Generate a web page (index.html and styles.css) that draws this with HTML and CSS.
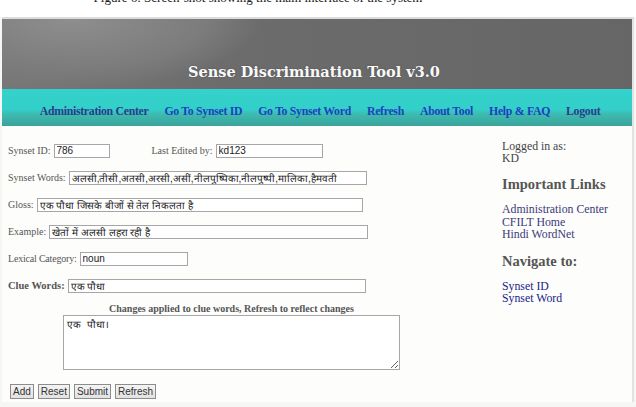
FILE: index.html
```html
<!DOCTYPE html>
<html lang="en">
<head>
    <meta charset="UTF-8">
    <meta name="viewport" content="width=device-width, initial-scale=1.0">
    <title>Sense Discrimination Tool v3.0</title>
    <link rel="stylesheet" href="styles.css">
</head>
<body>
    <p class="caption">Figure 6: Screen-shot showing the main interface of the system</p>

    <div class="frame">
        <div class="header">
            <h1>Sense Discrimination Tool v3.0</h1>
        </div>
        <div class="nav">
            <a href="#">Administration Center</a>
            <a href="#" class="blue">Go To Synset ID</a>
            <a href="#" class="blue">Go To Synset Word</a>
            <a href="#" class="blue">Refresh</a>
            <a href="#" class="blue">About Tool</a>
            <a href="#" class="blue">Help &amp; FAQ</a>
            <a href="#">Logout</a>
        </div>

        <div class="content">
            <form class="main">
                <div class="row">
                    <label for="synsetId">Synset ID:</label>
                    <input type="text" id="synsetId" class="w-id" value="786">
                    <label for="editedBy" class="edited">Last Edited by:</label>
                    <input type="text" id="editedBy" class="w-user" value="kd123">
                </div>
                <div class="row">
                    <label for="words">Synset Words:</label>
                    <input type="text" id="words" class="w-words" value="अलसी,तीसी,अतसी,अरसी,असीं,नीलपुष्पिका,नीलपुष्पी,मालिका,हैमवती">
                </div>
                <div class="row">
                    <label for="gloss">Gloss:</label>
                    <input type="text" id="gloss" class="w-gloss" value="एक पौधा जिसके बीजों से तेल निकलता है">
                </div>
                <div class="row">
                    <label for="example">Example:</label>
                    <input type="text" id="example" class="w-example" value="खेतों में अलसी लहरा रही है">
                </div>
                <div class="row">
                    <label for="category" class="tight">Lexical Category:</label>
                    <input type="text" id="category" class="w-cat" value="noun">
                </div>
                <div class="row">
                    <label for="clue" class="strong">Clue Words:</label>
                    <input type="text" id="clue" class="w-words" value="एक पौधा">
                </div>

                <div class="changes">
                    <p>Changes applied to clue words, Refresh to reflect changes</p>
                    <textarea>एक  पौधा।</textarea>
                </div>

                <div class="buttons">
                    <button type="button">Add</button>
                    <button type="reset">Reset</button>
                    <button type="submit">Submit</button>
                    <button type="button">Refresh</button>
                </div>
            </form>

            <div class="side">
                <p class="user">Logged in as:<br>KD</p>

                <h3>Important Links</h3>
                <ul>
                    <li><a href="#">Administration Center</a></li>
                    <li><a href="#">CFILT Home</a></li>
                    <li><a href="#">Hindi WordNet</a></li>
                </ul>

                <h3>Navigate to:</h3>
                <ul>
                    <li><a href="#" class="dark">Synset ID</a></li>
                    <li><a href="#" class="dark">Synset Word</a></li>
                </ul>
            </div>
        </div>
    </div>
</body>
</html>
```

FILE: styles.css
```css
body {
    margin: 0;
    background-color: #f6f6f4;
    font-family: "Liberation Serif", "Times New Roman", serif;
    color: #555;
}

/* figure caption above the screenshot, only its lower half shows */
.caption {
    margin: -10px 0 0;
    padding-right: 120px;
    height: 27px;
    text-align: center;
    font-size: 13px;
    line-height: 15px;
    color: #222;
    background: #fff;
}

.frame {
    margin: 0 2px;
    border-top: 2px solid #dcdcdc;
    border-right: 2px solid #e2e2e2;
    background: #fdfdfb;
}

.header {
    height: 70px;
    display: flex;
    align-items: flex-end;
    justify-content: center;
    background:
        radial-gradient(ellipse 190px 70px at 70px 0, #8e8e8e 0%, #7c7c7c 70%, rgba(124,124,124,0) 100%),
        linear-gradient(90deg, #777 0%, #6c6c6c 35%, #666 100%);
}

.header h1 {
    margin: 0 6px 9px 0;
    font-family: "DejaVu Serif", Georgia, serif;
    font-size: 14.5px;
    font-weight: bold;
    color: #fafafa;
    text-shadow: 0 0 2px rgba(0, 0, 0, 0.25);
}

.nav {
    height: 37px;
    display: flex;
    justify-content: center;
    align-items: center;
    gap: 16px;
    padding: 7px 0 0 6px;
    box-sizing: border-box;
    background: linear-gradient(180deg, #34d2cc 0%, #33cfc9 55%, #3dbbb0 68%, #3aa39b 100%);
}

.nav a {
    font-size: 11.8px;
    font-weight: bold;
    letter-spacing: -0.3px;
    color: #2b3b8c;
    text-decoration: none;
}

.nav a.blue {
    color: #1f3fc0;
}

.content {
    display: grid;
    grid-template-columns: 494px 1fr;
    padding: 1px 0 3px 6px;
    margin-top: 1px;
    background: #fdfdfb;
}

.main {
    padding-top: 9px;
}

.row {
    display: flex;
    align-items: center;
    height: 27px;
}

.row label {
    font-size: 10px;
    color: #555;
    margin-right: 3px;
}

.row label.edited {
    margin-left: 42px;
}

.row label.tight {
    letter-spacing: -0.2px;
}

.row label.strong {
    font-weight: bold;
    font-size: 10.5px;
}

input[type="text"] {
    height: 14px;
    box-sizing: border-box;
    padding: 0 2px;
    border: 1px solid #a6a6a6;
    background: #fff;
    font-family: "Liberation Sans", Arial, sans-serif;
    font-size: 10px;
    color: #222;
}

.w-id { width: 56px; }
.w-user { width: 107px; }
.w-words { width: 298px; }
.w-gloss { width: 326px; }
.w-example { width: 319px; }
.w-cat { width: 108px; }

.changes {
    margin-left: 55px;
    width: 337px;
}

.changes p {
    margin: 4px 0 0;
    line-height: 12px;
    text-align: center;
    font-size: 10px;
    font-weight: bold;
    color: #555;
}

.changes textarea {
    display: block;
    width: 337px;
    height: 55px;
    box-sizing: border-box;
    padding: 1px 3px;
    border: 1px solid #a6a6a6;
    background: #fff;
    font-family: "Liberation Sans", Arial, sans-serif;
    font-size: 10px;
    color: #222;
    resize: vertical;
}

.buttons {
    display: flex;
    gap: 4px;
    margin: 14px 0 0 2px;
}

button {
    height: 15px;
    padding: 0 2px;
    border: 1px solid #8c8c8c;
    background: linear-gradient(#f4f4f4, #e2e2e2);
    font-family: "Liberation Sans", Arial, sans-serif;
    font-size: 10px;
    color: #333;
    line-height: 12px;
}

.side {
    padding-top: 12px;
    font-size: 11.8px;
}

.side .user {
    margin: 0;
    line-height: 12px;
    color: #444;
}

.side h3 {
    margin: 12px 0 10px;
    font-size: 14.5px;
    color: #555;
}

.side ul {
    list-style: none;
    margin: 0;
    padding: 0;
    line-height: 12.5px;
}

.side a {
    color: #3a3a7a;
    text-decoration: none;
}

.side a.dark {
    color: #22228a;
}
```
